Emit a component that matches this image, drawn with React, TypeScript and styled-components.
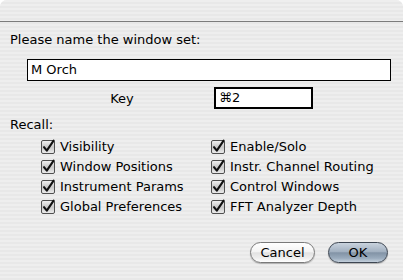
import React from 'react'
import styled, { createGlobalStyle } from 'styled-components'

const GlobalStyle = createGlobalStyle`
  html, body {
    margin: 0;
    padding: 0;
    background: #ffffff;
  }
  body {
    font-family: "DejaVu Sans", "Liberation Sans", sans-serif;
    font-size: 13px;
    color: #000;
  }
`

const pinstripe = `repeating-linear-gradient(
  to bottom,
  #eeeeee 0px,
  #eeeeee 2px,
  #e8e8e8 2px,
  #e8e8e8 4px
)`

const Sheet = styled.div`
  width: 403px;
  height: 280px;
  box-sizing: border-box;
  border-radius: 7px 7px 0 0;
  overflow: hidden;
  background: ${pinstripe};
  display: flex;
  flex-direction: column;
`

const TitleBar = styled.div`
  height: 21px;
  flex-shrink: 0;
  border-bottom: 1px solid #7c7c7c;
  background: ${pinstripe};
`

const Body = styled.div`
  flex: 1;
  display: flex;
  flex-direction: column;
  padding: 10px 12px 0 10px;
`

const Prompt = styled.div`
  height: 16px;
  line-height: 16px;
`

const NameField = styled.div`
  margin: 11px 0 0 17px;
  height: 20px;
  border: 1px solid #000;
  background: #fff;
  padding-left: 3px;
  line-height: 20px;
`

const KeyRow = styled.div`
  display: flex;
  align-items: center;
  margin-top: 6px;
  height: 22px;
`

const KeyLabel = styled.div`
  width: 204px;
  text-align: center;
  padding-left: 20px;
  box-sizing: border-box;
`

const KeyField = styled.div`
  width: 92px;
  height: 18px;
  border: 2px solid #000;
  background: #fff;
  padding-left: 3px;
  line-height: 18px;
`

const RecallLabel = styled.div`
  margin-top: 8px;
  height: 16px;
  line-height: 16px;
`

const Grid = styled.div`
  display: grid;
  grid-template-columns: 170px 170px;
  grid-auto-rows: 20px;
  margin: 3px 0 0 31px;
`

const Check = styled.label`
  display: flex;
  align-items: center;
  gap: 4px;
  white-space: nowrap;
`

const Box = styled.svg`
  width: 15px;
  height: 15px;
  flex-shrink: 0;
`

const Buttons = styled.div`
  display: flex;
  justify-content: flex-end;
  gap: 13px;
  margin-top: auto;
  margin-bottom: 17px;
  padding-right: 3px;
`

const Pill = styled.button<{ $primary?: boolean }>`
  font-family: inherit;
  font-size: 13px;
  height: 21px;
  width: ${({ $primary }) => ($primary ? '60px' : '65px')};
  border-radius: 11px;
  border: 1px solid ${({ $primary }) => ($primary ? '#3d4652' : '#7a7a7a')};
  color: #000;
  padding: 0;
  background: ${({ $primary }) =>
    $primary
      ? 'linear-gradient(to bottom, #c9d3de 0%, #a3b1c1 45%, #8293a6 52%, #9aabbd 80%, #c4d0dc 100%)'
      : 'linear-gradient(to bottom, #ffffff 0%, #f4f4f4 45%, #e2e2e2 52%, #efefef 80%, #ffffff 100%)'};
  box-shadow: 0 1px 1px rgba(0, 0, 0, 0.25);
`

const CheckBox = () => (
  <Box viewBox="0 0 15 15">
    <defs>
      <linearGradient id="cbg" x1="0" y1="0" x2="0" y2="1">
        <stop offset="0" stopColor="#f4f4f4" />
        <stop offset="0.5" stopColor="#c8c8c8" />
        <stop offset="1" stopColor="#ececec" />
      </linearGradient>
    </defs>
    <rect x="0.5" y="1.5" width="13" height="13" rx="1.5" fill="url(#cbg)" stroke="#4f4f4f" />
    <path d="M3 8.2 L5.8 11.6 L12.6 1.6" fill="none" stroke="#111" strokeWidth="2.1" strokeLinecap="round" strokeLinejoin="round" />
  </Box>
)

const items = [
  ['Visibility', 'Enable/Solo'],
  ['Window Positions', 'Instr. Channel Routing'],
  ['Instrument Params', 'Control Windows'],
  ['Global Preferences', 'FFT Analyzer Depth'],
]

export default function App() {
  return (
    <>
      <GlobalStyle />
      <Sheet>
        <TitleBar />
        <Body>
          <Prompt>Please name the window set:</Prompt>
          <NameField>M Orch</NameField>
          <KeyRow>
            <KeyLabel>Key</KeyLabel>
            <KeyField>⌘2</KeyField>
          </KeyRow>
          <RecallLabel>Recall:</RecallLabel>
          <Grid>
            {items.flat().map((label) => (
              <Check key={label}>
                <CheckBox />
                {label}
              </Check>
            ))}
          </Grid>
          <Buttons>
            <Pill>Cancel</Pill>
            <Pill $primary>OK</Pill>
          </Buttons>
        </Body>
      </Sheet>
    </>
  )
}
